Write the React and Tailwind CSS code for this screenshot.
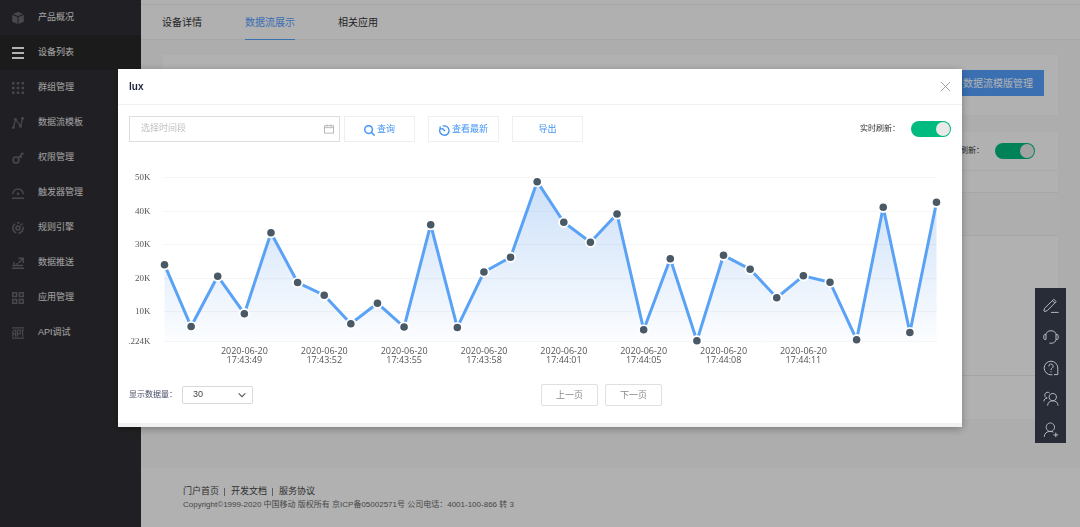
const SANS = "font-['Liberation_Sans','Noto_Sans_CJK_SC',sans-serif]";

function Icon({ children, className = 'size-3', box = 12, width = 1 }) {
  return (
    <svg
      viewBox={`0 0 ${box} ${box}`}
      className={className}
      fill="none"
      stroke="currentColor"
      strokeWidth={width}
      aria-hidden="true"
    >
      {children}
    </svg>
  );
}

const menu = [
  {
    label: '产品概况',
    icon: (
      <Icon>
        <path d="M6 0 11 1.9 6 3.9 1 1.9Z M.2 3 5.5 5.1V12L.2 9.7Z M11.8 3 6.5 5.1V12L11.8 9.7Z" fill="currentColor" stroke="none" />
      </Icon>
    ),
  },
  {
    label: '设备列表',
    active: true,
    icon: (
      <Icon width={2}>
        <path d="M0 1H12M0 6H12M0 11H12" />
      </Icon>
    ),
  },
  {
    label: '群组管理',
    icon: (
      <Icon width={2.4}>
        <path d="M0 1.2H12M0 6H12M0 10.8H12" strokeDasharray="2.4 2.4" />
      </Icon>
    ),
  },
  {
    label: '数据流模板',
    icon: (
      <Icon width={1.2}>
        <path d="M1.5 10 3.5 2.5 8.5 9 10.5 2" />
        <g fill="currentColor" stroke="none">
          <circle cx="1.4" cy="10.6" r="1.4" />
          <circle cx="3.5" cy="2.2" r="1.3" />
          <circle cx="8.5" cy="9.4" r="1.3" />
          <circle cx="10.6" cy="1.5" r="1.4" />
        </g>
      </Icon>
    ),
  },
  {
    label: '权限管理',
    icon: (
      <Icon width={1.6}>
        <circle cx="4" cy="8" r="3" />
        <circle cx="4" cy="8" r=".6" fill="currentColor" stroke="none" />
        <path d="M6 6 10.8 1.2M8 4 10 5.5M9 1.6H11.6" />
      </Icon>
    ),
  },
  {
    label: '触发器管理',
    icon: (
      <Icon width={1.5}>
        <path d="M.8 7.2A5.2 5.2 0 0 1 11.2 7.2M0 11.2H12" />
        <circle cx="6" cy="6.8" r="1.3" fill="currentColor" stroke="none" />
      </Icon>
    ),
  },
  {
    label: '规则引擎',
    icon: (
      <Icon width={1.5}>
        <circle cx="6" cy="6" r="2" />
        <path d="M4.2 10.9A5.2 5.2 0 0 1 3 1.8M5 .9A5.2 5.2 0 0 1 7.6 1M11 4.8A5.2 5.2 0 0 1 6.5 11.2M8.5 3.5 10.5 1.5" />
      </Icon>
    ),
  },
  {
    label: '数据推送',
    icon: (
      <Icon width={1.5}>
        <path d="M0 11.2H12M.5 8.4H11M2 7.5V5M5 7.5V6M6.5 6 10.5 1.8M6.5 1.2H11.2V6" />
      </Icon>
    ),
  },
  {
    label: '应用管理',
    icon: (
      <Icon width={1.5}>
        <path d="M.8.8H4.6V4.6H.8ZM7.4.8H11.2V4.6H7.4ZM.8 7.4H4.6V11.2H.8ZM7.4 7.4H11.2V11.2H7.4Z" />
      </Icon>
    ),
  },
  {
    label: 'API调试',
    icon: (
      <Icon width={1.2}>
        <path d="M0 .8H12M0 11.2H12M.8 9.8V4.5L2 3H3.6V9.8M.8 6.8H3.6M5.4 9.8V3H8.2V6.8H5.4M10.6 3V9.8M9.4 3H11.8" />
      </Icon>
    ),
  },
];

const tools = [
  {
    label: '编辑',
    icon: <path d="M2 13.4 .9 13 1.6 10.2 10.8 1.3 13.2 3.6 4.2 12.7ZM9.4 2.6 11.9 5M8 14.4H15.6" />,
  },
  {
    label: '客服',
    icon: (
      <path d="M2.6 6.2A5.5 5.5 0 0 1 13.4 6.2M3 5.6V10.4H1.8A1 1 0 0 1 .8 9.4V6.6A1 1 0 0 1 1.8 5.6ZM13 5.6V10.4H14.2A1 1 0 0 0 15.2 9.4V6.6A1 1 0 0 0 14.2 5.6ZM13 10.4C12.6 12.6 11.3 13.8 9.4 14M6.4 14.2H9.4" />
    ),
  },
  {
    label: '帮助',
    icon: (
      <path d="M8 1.2A6.8 6.8 0 1 0 8 14.8M11 14.6H14.8V8A6.8 6.8 0 0 0 8 1.2M8 14.8H9.4M5.8 6.4A2.2 2.2 0 1 1 9 8.2C8.2 8.7 8 9 8 10M8 11.3V12.4" />
    ),
  },
  {
    label: '社区',
    icon: (
      <path d="M9.8 2.4A3.7 3.7 0 1 1 9.7 2.4ZM4.6 14.6C4.8 11.6 6.6 9.8 9.8 9.8S14.8 11.6 15 14.6M6.6 2A2.9 2.9 0 1 0 4.2 7C2.2 7.2 1 8.4 .8 10.4" />
    ),
  },
  {
    label: '邀请成员',
    icon: (
      <path d="M7.4 1A4.2 4.2 0 1 1 7.3 1ZM1.2 14.8C1.6 11.2 3.6 9.4 7.2 9.4 8.6 9.4 9.6 9.7 10.4 10.2M12.8 10.6V15.2M10.4 12.9H15.2" />
    ),
  },
];

function Toggle({ label, id }) {
  return (
    <div className="flex items-center gap-[11px]">
      <label htmlFor={id} className="text-[8px] leading-3 text-[#333]">
        {label}
      </label>
      <input
        id={id}
        type="checkbox"
        defaultChecked
        className="h-4 w-10 appearance-none rounded-full bg-[#c4c4c4] p-px before:block before:size-[14px] before:rounded-full before:bg-[#e9e9e9] checked:bg-[#00bb80] checked:before:ml-auto"
      />
    </div>
  );
}

const values = [
  264.7, 326.5, 276.2, 313.7, 232.7, 282.5, 295.2, 323.7, 303.3, 327, 224.7, 327.5, 272, 257.2, 181.7,
  222.3, 242.2, 214, 329.8, 258.7, 340.7, 255.3, 269.2, 297.7, 275.8, 282.2, 339.7, 207.3, 332.5, 202.2,
];
const points = values.map((y, i) => [46.5 + i * 26.62, y - 160]);
const line = points.map(([x, y]) => `${x.toFixed(1)},${y.toFixed(1)}`).join(' ');
const scale = [
  ['50K', 17],
  ['40K', 51],
  ['30K', 84],
  ['20K', 118],
  ['10K', 151],
  ['.224K', 181],
];
const times = ['17:43:49', '17:43:52', '17:43:55', '17:43:58', '17:44:01', '17:44:05', '17:44:08', '17:44:11'];

function Chart() {
  return (
    <svg viewBox="0 0 844 210" className="block w-full" role="img" aria-label="lux">
      <defs>
        <linearGradient id="area" x1="0" y1="0" x2="0" y2="1">
          <stop offset="0" stopColor="#4f93ea" stopOpacity=".29" />
          <stop offset="1" stopColor="#4f93ea" stopOpacity=".02" />
        </linearGradient>
      </defs>
      {scale.map(([label, y]) => (
        <g key={label}>
          <line x1="46" x2="819" y1={y + 0.5} y2={y + 0.5} stroke="#f5f5f5" />
          <text x="32.5" y={y + 3} textAnchor="end" className="fill-[#555] font-['Liberation_Serif',serif] text-[9px]">
            {label}
          </text>
        </g>
      ))}
      <polygon points={`46.5,181 ${line} 818.5,181`} fill="url(#area)" />
      <polyline points={line} fill="none" stroke="#5aa2f5" strokeWidth="3" />
      {points.map(([x, y]) => (
        <circle key={x} cx={x} cy={y} r="4.7" fill="#4a5966" stroke="#fff" strokeWidth="1.8" />
      ))}
      {times.map((time, i) => (
        <g key={time} textAnchor="middle" className="fill-[#555] font-['Open_Sans',sans-serif] text-[9px]">
          <text x={126.4 + i * 79.86} y="194">
            2020-06-20
          </text>
          <text x={126.4 + i * 79.86} y="203">
            {time}
          </text>
        </g>
      ))}
    </svg>
  );
}

function Sidebar() {
  return (
    <nav className="w-[141px] shrink-0 bg-[#2f2f34]">
      <ul>
        {menu.map(({ label, icon, active }) => (
          <li key={label}>
            <a
              href="#"
              className={
                active
                  ? 'flex h-[35px] items-center gap-[14px] bg-[#282827] pl-3 text-[9px] text-[#f4f4f4]'
                  : 'flex h-[35px] items-center gap-[14px] pl-3 text-[9px] text-[#e8e8e8]'
              }
            >
              <span className={active ? 'text-white' : 'text-[#69696d]'}>{icon}</span>
              {label}
            </a>
          </li>
        ))}
      </ul>
    </nav>
  );
}

function Page() {
  return (
    <div className="flex min-w-0 flex-1 flex-col bg-[#f8f8f8]">
      <header className="border-b border-[#f0f0f0] bg-[#fcfcfc]">
        <div className="h-[5px] border-b border-[#ededed]" />
        <nav className="flex gap-[43px] pl-[21px] text-[10px] leading-[33px] text-[#333]">
          <a href="#" className="pt-px">
            设备详情
          </a>
          <a href="#" className="-mb-px border-b border-[#549fff] pt-px text-[#549fff]">
            数据流展示
          </a>
          <a href="#" className="pt-px">
            相关应用
          </a>
        </nav>
      </header>

      <main className="flex-1 px-[22px] pt-[15px]">
        <section className="flex h-[60px] items-center justify-end bg-[#fefefe] px-[14px]">
          <button className="mb-1 h-[26px] bg-[#549fff] px-[11px] text-[10px] text-white">数据流模版管理</button>
        </section>

        <section className="mt-[17px] bg-[#fefefe]">
          <div className="flex h-[39px] items-center justify-end border-b border-[#f2f2f2] pr-[23px]">
            <Toggle label="实时刷新：" id="page-refresh" />
          </div>
          <div className="h-[22px] border-b border-[#f0f0f0]" />
          <div className="h-[43px] border-b border-[#f0f0f0] bg-[#f9f9f9]" />
          <div className="h-[140px] border-b border-[#ededed]" />
          <div className="h-[43px]" />
        </section>
      </main>

      <footer className="mt-12 h-[59px] bg-[#fefefe] pt-[17px] pl-[42px] leading-[13px]">
        <div className="flex items-center text-[9px] text-[#444]">
          <a href="#">门户首页</a>
          <a href="#" className="ml-[5px] flex items-center gap-[6px] before:h-2 before:w-px before:bg-[#888]">
            开发文档
          </a>
          <a href="#" className="ml-[5px] flex items-center gap-[6px] before:h-2 before:w-px before:bg-[#888]">
            服务协议
          </a>
        </div>
        <p className="text-[8px] text-[#666]">
          Copyright©1999-2020 中国移动 版权所有 京ICP备05002571号 公司电话：4001-100-866 转 3
        </p>
      </footer>
    </div>
  );
}

const actionClass =
  'flex h-[26px] w-[71px] items-center justify-center gap-0.5 border border-[#efefef] pt-0.5 text-[9px] text-[#4293f5]';
const pagerClass = 'h-[22px] w-[57px] rounded-xs border border-[#e0e0e0] pt-0.5 text-[9px] text-[#888]';

function Dialog() {
  return (
    <div className="fixed inset-0 flex items-start justify-center bg-black/30 pt-[69px]">
      <div
        role="dialog"
        aria-labelledby="dialog-title"
        className="w-full max-w-[844px] border-b-4 border-[#f1f1f1] bg-white shadow-[0_2px_8px_rgba(0,0,0,0.3)]"
      >
        <div className="flex h-9 items-center justify-between border-b border-[#f0f0f0] pr-[11px] pl-[11px]">
          <h2 id="dialog-title" className="text-[10px] font-bold text-[#1f2740]">
            lux
          </h2>
          <button aria-label="关闭" className="text-[#999]">
            <Icon className="size-[11px]">
              <path d="M1 1 11 11M11 1 1 11" />
            </Icon>
          </button>
        </div>

        <div className="flex items-center px-[11px] pt-[11px]">
          <div className="flex h-[26px] w-[211px] items-center border border-[#dedede] pr-[5px] pl-[11px]">
            <input
              type="text"
              aria-label="选择时间段"
              placeholder="选择时间段"
              className="min-w-0 flex-1 text-[9px] outline-none placeholder:text-[#c0c0c0]"
            />
            <Icon className="size-[10px] text-[#aaa]">
              <path d="M.6 2H11.4V11H.6ZM.6 4.4H11.4M3.5 .6V3M8.5 .6V3" />
            </Icon>
          </div>
          <button className={`ml-1 ${actionClass}`}>
            <Icon className="size-[11px]" width={1.6}>
              <circle cx="5" cy="5" r="4.2" />
              <path d="M8 8 11.6 11.6" />
            </Icon>
            查询
          </button>
          <button className={`ml-[13px] ${actionClass}`}>
            <Icon className="size-[11px]" width={1.5}>
              <path d="M4 1.3A5.1 5.1 0 1 1 1.2 4M1.3 1.6 1.2 4 3.4 4.2M3.5 3.5 6.5 6.5" />
            </Icon>
            查看最新
          </button>
          <button className={`ml-[13px] ${actionClass}`}>导出</button>
          <div className="ml-auto">
            <Toggle label="实时刷新：" id="dialog-refresh" />
          </div>
        </div>

        <div className="pt-[18px]">
          <Chart />
        </div>

        <div className="flex items-center px-[11px] pt-[14px] pb-[17px]">
          <label htmlFor="page-size" className="text-[8px] leading-3 text-[#444c66]">
            显示数据量：
          </label>
          <div className="relative ml-[5px]">
            <select
              id="page-size"
              defaultValue="30"
              className="block h-[18px] w-[71px] appearance-none rounded-xs border border-[#d9d9d9] bg-white pl-[10px] text-[9px] text-[#444]"
            >
              <option>10</option>
              <option>30</option>
              <option>50</option>
            </select>
            <Icon className="pointer-events-none absolute top-[5px] right-[7px] size-2 text-[#555]" width={1.6}>
              <path d="M1 3.5 6 8.5 11 3.5" />
            </Icon>
          </div>
          <div className="ml-[288px] flex gap-[7px]">
            <button className={pagerClass}>上一页</button>
            <button className={pagerClass}>下一页</button>
          </div>
        </div>
      </div>
    </div>
  );
}

export default function App() {
  return (
    <div className={`flex min-h-screen ${SANS}`}>
      <Sidebar />
      <Page />
      <Dialog />
      <aside className="fixed right-[14px] bottom-[84px] bg-[#272c37] text-[#b4b8be]">
        {tools.map(({ label, icon }) => (
          <button key={label} aria-label={label} className="flex size-[31px] items-center justify-center pt-1">
            <Icon className="size-4" box={16}>
              {icon}
            </Icon>
          </button>
        ))}
      </aside>
    </div>
  );
}
